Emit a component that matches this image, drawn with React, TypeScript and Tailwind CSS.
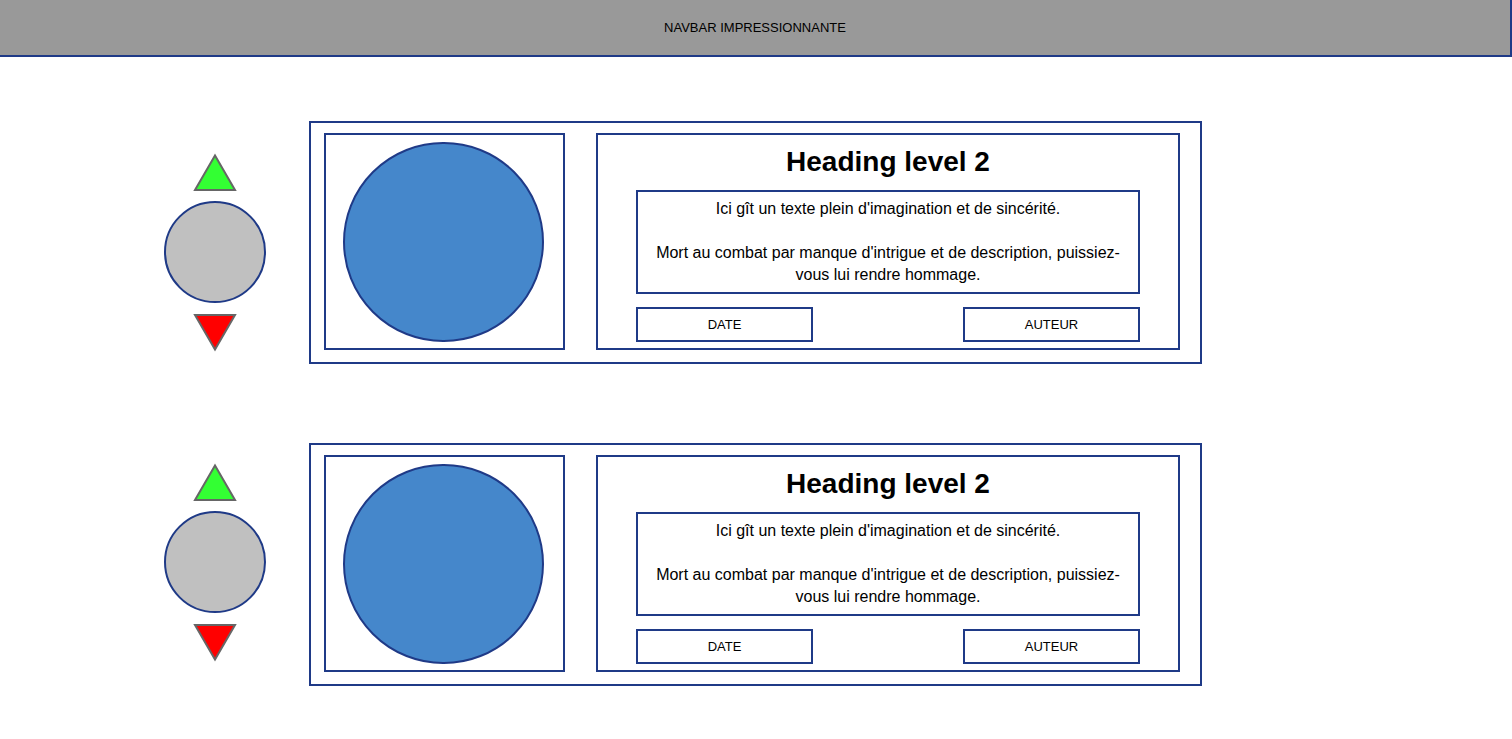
import React from 'react';

const navy = 'border-[#1f3a87]';

function Arrow({ dir }: { dir: 'up' | 'down' }) {
  const up = dir === 'up';
  return (
    <svg width="42" height="37" viewBox="0 0 42 37" className="block overflow-visible">
      <polygon
        points={up ? '21,1.5 1,36 41,36' : '1,1 41,1 21,35.5'}
        fill={up ? '#33ff33' : '#ff0000'}
        stroke="#666666"
        strokeWidth="2"
      />
    </svg>
  );
}

function Card({ offset }: { offset: string }) {
  return (
    <div className="flex items-start">
      <div className={`ml-[164px] w-[102px] flex flex-col items-center ${offset}`}>
        <Arrow dir="up" />
        <div className={`mt-[10px] w-[102px] h-[102px] rounded-full bg-[#c0c0c0] border-2 ${navy}`} />
        <div className="mt-[11px]">
          <Arrow dir="down" />
        </div>
      </div>
      <div className={`ml-[43px] w-[893px] h-[243px] border-2 ${navy} flex items-start pl-[13px] pt-[10px]`}>
        <div className={`w-[241px] h-[217px] border-2 ${navy}`}>
          <div className={`ml-[17px] mt-[7px] w-[201px] h-[200px] rounded-full bg-[#4587cb] border-2 ${navy}`} />
        </div>
        <div className={`ml-[31px] w-[584px] h-[217px] border-2 ${navy} px-[38px] flex flex-col`}>
          <h2 className="mt-[11px] text-[28px] leading-[32px] font-bold text-center text-black">Heading level 2</h2>
          <div className={`mt-[12px] h-[104px] border-2 ${navy} px-[16px] pt-[6px] text-[16px] leading-[22px] text-center text-black`}>
            <p>Ici gît un texte plein d'imagination et de sincérité.</p>
            <p className="mt-[22px]">Mort au combat par manque d'intrigue et de description, puissiez-vous lui rendre hommage.</p>
          </div>
          <div className="mt-[13px] flex justify-between">
            <div className={`w-[177px] h-[35px] border-2 ${navy} flex items-center justify-center text-[13px] text-black`}>DATE</div>
            <div className={`w-[177px] h-[35px] border-2 ${navy} flex items-center justify-center text-[13px] text-black`}>AUTEUR</div>
          </div>
        </div>
      </div>
    </div>
  );
}

export default function App() {
  return (
    <div className="min-h-[739px] bg-white font-['Liberation_Sans',Arial,sans-serif]">
      <nav className={`h-[57px] bg-[#999999] border-b-2 border-r-2 ${navy} flex items-center justify-center text-[13px] text-black`}>
        NAVBAR IMPRESSIONNANTE
      </nav>
      <main className="pt-[64px] flex flex-col gap-[79px]">
        <Card offset="mt-[33px]" />
        <Card offset="mt-[21px]" />
      </main>
    </div>
  );
}
